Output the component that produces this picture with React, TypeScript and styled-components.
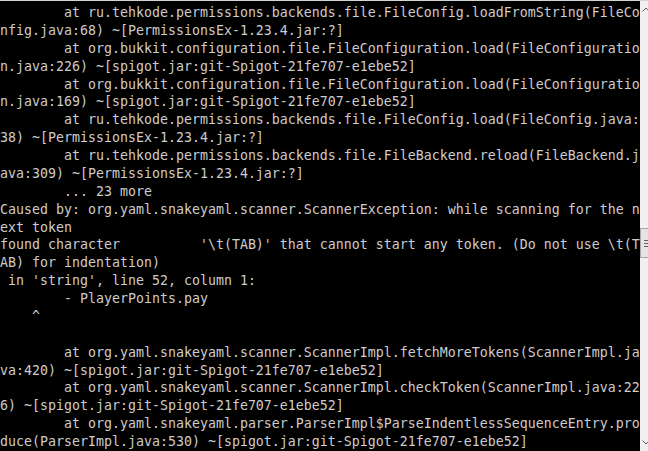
import React from "react";
import styled, { createGlobalStyle } from "styled-components";

const Global = createGlobalStyle`
  html, body { margin: 0; padding: 0; background: #000; }
  body { width: 648px; height: 451px; overflow: hidden; }
`;

const Window = styled.div`
  display: flex;
  width: 648px;
  height: 451px;
  box-sizing: border-box;
  border-top: 1px solid #d4d4d4;
  background: #000;
  overflow: hidden;
`;

const Console = styled.div`
  width: 640px;
  flex: none;
  padding-top: 3px;
  overflow: hidden;
`;

const Line = styled.div`
  font-family: "DejaVu Sans Mono", "Liberation Mono", monospace;
  font-size: 13.29px;
  line-height: 17.875px;
  height: 17.875px;
  color: #cccccc;
  white-space: pre;
  overflow: hidden;
`;

const ScrollBar = styled.div`
  flex: 1;
  display: flex;
  flex-direction: column;
  background: #f0f0f0;
`;

const Arrow = styled.div`
  height: 17px;
  flex: none;
  display: flex;
  align-items: center;
  padding-left: 2px;
`;

const Track = styled.div`
  flex: 1;
  display: flex;
  flex-direction: column;
`;

const Thumb = styled.div`
  margin-top: 210px;
  height: 30px;
  box-sizing: border-box;
  border: 1px solid #a8a8a8;
  border-right: none;
  background: #e4e4e4;
  display: flex;
  flex-direction: column;
  justify-content: center;
  gap: 2px;
  padding-left: 3px;
`;

const Grip = styled.div`
  height: 1px;
  width: 6px;
  background: #606060;
`;

const lines: string[] = [
  "        at ru.tehkode.permissions.backends.file.FileConfig.loadFromString(FileCo",
  "nfig.java:68) ~[PermissionsEx-1.23.4.jar:?]",
  "        at org.bukkit.configuration.file.FileConfiguration.load(FileConfiguratio",
  "n.java:226) ~[spigot.jar:git-Spigot-21fe707-e1ebe52]",
  "        at org.bukkit.configuration.file.FileConfiguration.load(FileConfiguratio",
  "n.java:169) ~[spigot.jar:git-Spigot-21fe707-e1ebe52]",
  "        at ru.tehkode.permissions.backends.file.FileConfig.load(FileConfig.java:",
  "38) ~[PermissionsEx-1.23.4.jar:?]",
  "        at ru.tehkode.permissions.backends.file.FileBackend.reload(FileBackend.j",
  "ava:309) ~[PermissionsEx-1.23.4.jar:?]",
  "        ... 23 more",
  "Caused by: org.yaml.snakeyaml.scanner.ScannerException: while scanning for the n",
  "ext token",
  "found character          '\\t(TAB)' that cannot start any token. (Do not use \\t(T",
  "AB) for indentation)",
  " in 'string', line 52, column 1:",
  "        - PlayerPoints.pay",
  "    ^",
  "",
  "        at org.yaml.snakeyaml.scanner.ScannerImpl.fetchMoreTokens(ScannerImpl.ja",
  "va:420) ~[spigot.jar:git-Spigot-21fe707-e1ebe52]",
  "        at org.yaml.snakeyaml.scanner.ScannerImpl.checkToken(ScannerImpl.java:22",
  "6) ~[spigot.jar:git-Spigot-21fe707-e1ebe52]",
  "        at org.yaml.snakeyaml.parser.ParserImpl$ParseIndentlessSequenceEntry.pro",
  "duce(ParserImpl.java:530) ~[spigot.jar:git-Spigot-21fe707-e1ebe52]",
];

export default function App() {
  return (
    <>
      <Global />
      <Window>
        <Console>
          {lines.map((l, i) => (
            <Line key={i}>{l}</Line>
          ))}
        </Console>
        <ScrollBar>
          <Arrow>
            <svg width="8" height="5" viewBox="0 0 8 5">
              <path d="M0.5 4.5 L4 1 L7.5 4.5" stroke="#606060" strokeWidth="1" fill="none" />
            </svg>
          </Arrow>
          <Track>
            <Thumb>
              <Grip />
              <Grip />
              <Grip />
            </Thumb>
          </Track>
          <Arrow>
            <svg width="8" height="5" viewBox="0 0 8 5">
              <path d="M0.5 0.5 L4 4 L7.5 0.5" stroke="#606060" strokeWidth="1" fill="none" />
            </svg>
          </Arrow>
        </ScrollBar>
      </Window>
    </>
  );
}
